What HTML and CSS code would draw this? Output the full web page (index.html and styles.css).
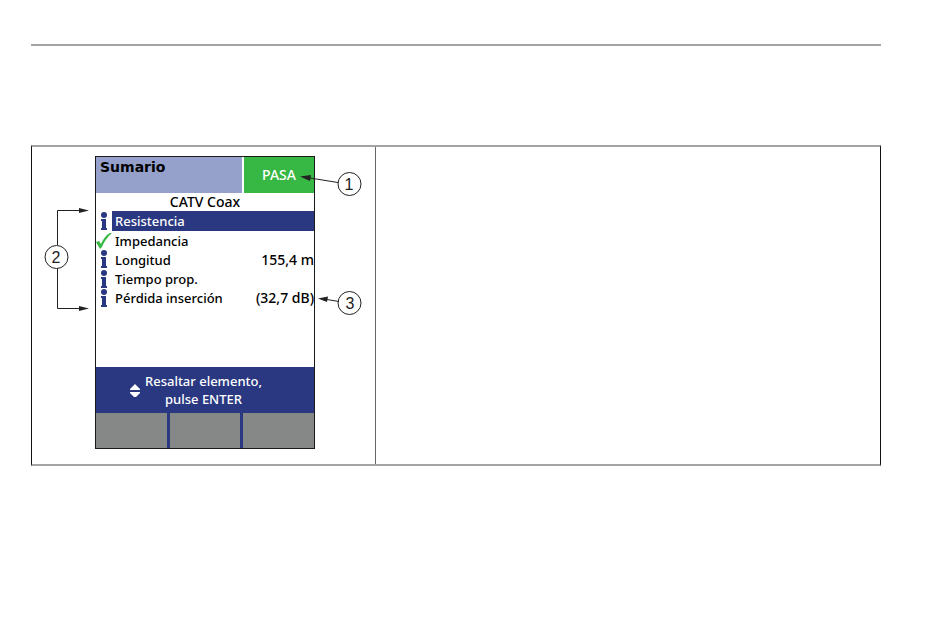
FILE: index.html
```html
<!DOCTYPE html>
<html lang="es">

<head>
    <meta charset="UTF-8">
    <meta name="viewport" content="width=device-width, initial-scale=1.0">
    <title>Sumario</title>
    <link rel="stylesheet" href="styles.css">
</head>

<body>
    <!-- shared icon shapes -->
    <svg class="sprite" aria-hidden="true">
        <symbol id="info" viewBox="0 0 8 19">
            <circle cx="4" cy="3" r="3" />
            <path d="M1 7H6V16H7V18H1V16H2V9H1Z" />
        </symbol>
        <symbol id="check" viewBox="0 0 16 16">
            <path d="M0 9L3 8L5 11C7 6 10 2 14 0H16C11 4 8 9 6 14L4 16Z" />
        </symbol>
    </svg>

    <hr class="rule">

    <main class="frame">
        <section class="figure">
            <div class="device">
                <header class="device-header">
                    <h1 class="title">Sumario</h1>
                    <div class="status">PASA</div>
                </header>

                <h2 class="cable">CATV Coax</h2>

                <ul class="results">
                    <li class="result selected">
                        <svg class="icon info"><use href="#info" /></svg>
                        <span class="name">Resistencia</span>
                    </li>
                    <li class="result">
                        <svg class="icon check"><use href="#check" /></svg>
                        <span class="name">Impedancia</span>
                    </li>
                    <li class="result">
                        <svg class="icon info"><use href="#info" /></svg>
                        <span class="name">Longitud</span>
                        <span class="value">155,4 m</span>
                    </li>
                    <li class="result">
                        <svg class="icon info"><use href="#info" /></svg>
                        <span class="name">Tiempo prop.</span>
                    </li>
                    <li class="result">
                        <svg class="icon info"><use href="#info" /></svg>
                        <span class="name">Pérdida inserción</span>
                        <span class="value">(32,7 dB)</span>
                    </li>
                </ul>

                <div class="prompt">
                    <svg class="updown" viewBox="0 0 10 13">
                        <path d="M5 0L10 5V6H0V5ZM0 8H10V9L6 13H4L0 9Z" />
                    </svg>
                    <p>Resaltar elemento,<br>pulse ENTER</p>
                </div>

                <div class="softkeys">
                    <button type="button" aria-label="F1"></button>
                    <button type="button" aria-label="F2"></button>
                    <button type="button" aria-label="F3"></button>
                </div>
            </div>

            <!-- callouts -->
            <svg class="callouts" viewBox="0 0 343 317">
                <path class="line" d="M306 35.500L278 31M25.500 98V63.500H48M25.500 121V161.500H48M307 154.500L295 152.500" />
                <path class="head" d="M268 29.500L279 28L278 34ZM57 63.500L47 61V66ZM57 161.500L47 159V164ZM286 151.500L296 149.500L295 155Z" />
                <circle class="ring" cx="317.500" cy="37" r="11.500" />
                <circle class="ring" cx="24.500" cy="110" r="11.500" />
                <circle class="ring" cx="317.500" cy="156" r="11.500" />
                <text x="317" y="43">1</text>
                <text x="24" y="116">2</text>
                <text x="318" y="162">3</text>
            </svg>
        </section>
        <section class="notes"></section>
    </main>
</body>

</html>
```

FILE: styles.css
```css
* {
    margin: 0;
    padding: 0;
    box-sizing: border-box;
}

body {
    background: #fff;
    color: #000;
    padding: 44px 69px 44px 31px;
    font-family: "Noto Sans", Tahoma, sans-serif;
    font-size: 13px;
    font-weight: 500;
    line-height: 18px;
}

.sprite {
    display: none;
}

.rule {
    height: 2px;
    border: none;
    background: #a3a3a3;
    margin-bottom: 99px;
}

.frame {
    display: flex;
    border: 1px solid #111;
    border-top: 2px solid #a3a3a3;
    border-bottom: 2px solid #a3a3a3;
}

.figure {
    position: relative;
    flex: 0 0 344px;
    padding: 9px 60px 15px 63px;
    border-right: 1px solid #666;
}

.notes {
    flex: 1;
}

.device {
    border: 1px solid #1a1a1a;
}

.device-header {
    display: grid;
    grid-template-columns: 1fr 70px;
    gap: 2px;
    height: 36px;
}

.title {
    background: #95a1cb;
    padding-left: 4px;
    font-family: "DejaVu Sans", Verdana, sans-serif;
    font-size: 14px;
    line-height: 20px;
}

.status {
    display: flex;
    align-items: center;
    justify-content: center;
    background: #37b743;
    color: #fff;
    font-size: 14px;
}

.cable {
    font-size: 14px;
    font-weight: 500;
    text-align: center;
}

.results {
    display: grid;
    grid-auto-rows: 1fr;
    height: 97px;
    list-style: none;
}

.result {
    display: grid;
    grid-template-columns: 16px 1fr auto;
    align-items: center;
}

.result .name {
    padding-left: 3px;
}

.result .value {
    font-size: 14px;
}

.selected .name {
    background: #293881;
    color: #fff;
    grid-column: 2 / 4;
    line-height: 20px;
}

.icon.info {
    width: 8px;
    height: 19px;
    justify-self: center;
    fill: #293881;
}

.icon.check {
    width: 16px;
    height: 16px;
    fill: #37b743;
}

.prompt {
    display: flex;
    align-items: center;
    justify-content: center;
    gap: 5px;
    height: 46px;
    margin-top: 59px;
    padding-right: 18px;
    background: #293881;
    color: #fff;
    text-align: center;
}

.updown {
    width: 10px;
    height: 13px;
    fill: #fff;
}

.softkeys {
    display: grid;
    grid-template-columns: repeat(3, 1fr);
    gap: 3px;
    height: 35px;
    background: #293881;
}

.softkeys button {
    border: none;
    background: #868887;
}

.callouts {
    position: absolute;
    top: 0;
    left: 0;
    width: 343px;
    height: 317px;
}

.callouts .line,
.callouts .ring {
    fill: none;
    stroke: #222;
    stroke-width: 1px;
}

.callouts .head {
    fill: #222;
}

.callouts text {
    fill: #222;
    font-family: "Liberation Sans", Arial, sans-serif;
    font-size: 16px;
    font-weight: normal;
    text-anchor: middle;
}
```
